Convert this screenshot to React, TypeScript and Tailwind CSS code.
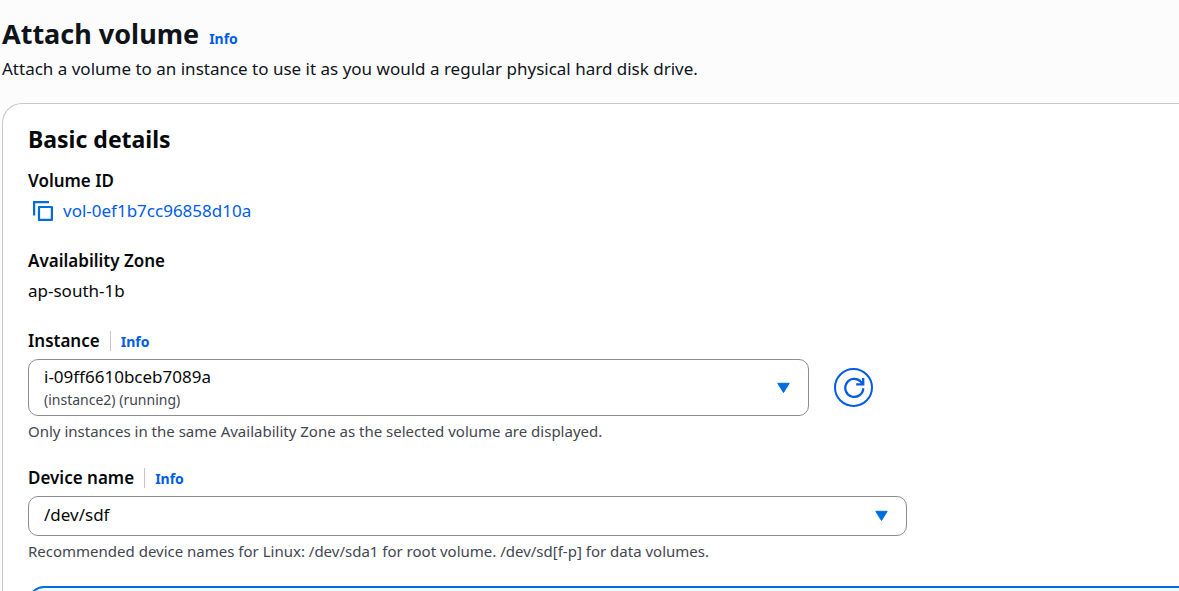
import type { ReactNode } from "react";

function InfoLink({ topic }: { topic: string }) {
  return (
    <a href="#info" aria-label={`Info about ${topic}`} className="text-[14px] leading-5 font-bold text-[#005ce6]">
      Info
    </a>
  );
}

function Caret() {
  return (
    <svg
      aria-hidden="true"
      viewBox="0 0 14 12"
      className="pointer-events-none absolute top-1/2 right-[18px] h-3 w-3.5 -translate-y-1/2"
    >
      <path d="M0.8 1.3h11.4L6.5 10.5z" fill="#006ce0" stroke="#006ce0" strokeWidth="1" strokeLinejoin="round" />
    </svg>
  );
}

function CopyIcon() {
  return (
    <svg aria-hidden="true" viewBox="0 0 20 20" className="h-5 w-5" fill="none" stroke="#006ce0" strokeWidth="2.2">
      <path d="M1.1 14.5V1.1H16" />
      <path d="M6 6h12.9v12.9H6z" strokeLinejoin="round" />
    </svg>
  );
}

function RefreshIcon() {
  return (
    <svg aria-hidden="true" viewBox="0 0 22 22" className="h-[22px] w-[22px]" fill="none" stroke="#005ce6" strokeWidth="2.3">
      <path d="M20.3 11.3a9 9 0 1 1-2.4-6.5l2 2.4" />
      <path d="M20.2 1v6.4h-7" />
    </svg>
  );
}

function FieldLabel({ id, children }: { id: string; children: string }) {
  return (
    <div className="flex h-5 items-center">
      <label htmlFor={id} className="text-[17px] leading-5 font-semibold">
        {children}
      </label>
      <span className="ml-2.5 h-5 border-l border-[#c6c6cd] pl-2.5 leading-5">
        <InfoLink topic={children} />
      </span>
    </div>
  );
}

function Hint({ id, children }: { id: string; children: ReactNode }) {
  return (
    <p id={id} className="mt-1 text-[15px] leading-[22px] text-[#424650]">
      {children}
    </p>
  );
}

export default function App() {
  return (
    <main className="flex h-screen flex-col overflow-hidden bg-[#fcfcfd] pt-4 pl-0.5 font-['Noto_Sans',sans-serif] text-[#0f141a]">
      <header>
        <div className="flex items-baseline gap-2.5">
          <h1 className="text-[27px] leading-[35px] font-bold">Attach volume</h1>
          <InfoLink topic="attaching a volume" />
        </div>
        <p className="mt-1.5 text-[17px] leading-6">
          Attach a volume to an instance to use it as you would a regular physical hard disk drive.
        </p>
      </header>

      <section className="mt-[22px] flex grow flex-col rounded-tl-[20px] border-t border-l border-[#c6c6cd] bg-white pt-5 pl-[25px] text-[#06080a]">
        <h2 className="text-[23px] leading-[30px] font-bold">Basic details</h2>

        <dl className="mt-[17px] text-[17px]">
          <dt className="leading-5 font-semibold">Volume ID</dt>
          <dd className="mt-2 flex h-6 items-center gap-2.5 pl-[5px]">
            <button type="button" aria-label="Copy volume ID">
              <CopyIcon />
            </button>
            <a href="#volume" className="leading-6 text-[#005ce6]">
              vol-0ef1b7cc96858d10a
            </a>
          </dd>
          <dt className="mt-7 leading-5 font-semibold">Availability Zone</dt>
          <dd className="mt-2 leading-6">ap-south-1b</dd>
        </dl>

        <form className="mt-7 flex flex-col">
          <div className="w-full max-w-[879px]">
            <FieldLabel id="instance">Instance</FieldLabel>
            <div className="mt-2 flex items-center gap-[25px] pr-[34px]">
              <div className="relative grow">
                <select
                  id="instance"
                  aria-describedby="instance-detail instance-hint"
                  className="block h-[57px] w-full appearance-none rounded-[10px] border border-[#8c8c94] bg-white pr-12 pb-[22px] pl-[15px] text-[17px]"
                >
                  <option>i-09ff6610bceb7089a</option>
                </select>
                <span
                  id="instance-detail"
                  className="pointer-events-none absolute bottom-1.5 left-4 text-[14px] leading-5 text-[#424650]"
                >
                  (instance2) (running)
                </span>
                <Caret />
              </div>
              <button
                type="button"
                aria-label="Refresh instances"
                className="flex h-[39px] w-[39px] shrink-0 items-center justify-center rounded-full border-2 border-[#005ce6]"
              >
                <RefreshIcon />
              </button>
            </div>
            <Hint id="instance-hint">
              Only instances in the same Availability Zone as the selected volume are displayed.
            </Hint>
          </div>

          <div className="mt-[26px] w-full max-w-[879px]">
            <FieldLabel id="device">Device name</FieldLabel>
            <div className="relative mt-2">
              <select
                id="device"
                aria-describedby="device-hint"
                className="block h-10 w-full appearance-none rounded-[10px] border border-[#8c8c94] bg-white pr-12 pb-0.5 pl-[15px] text-[17px]"
              >
                <option>/dev/sdf</option>
              </select>
              <Caret />
            </div>
            <Hint id="device-hint">
              Recommended device names for Linux: /dev/sda1 for root volume. /dev/sd[f-p] for data volumes.
            </Hint>
          </div>
        </form>

        <div className="mt-6 min-h-20 rounded-tl-2xl border-t-2 border-l-2 border-[#006ce0] bg-[#f0fbff]" />
      </section>
    </main>
  );
}
